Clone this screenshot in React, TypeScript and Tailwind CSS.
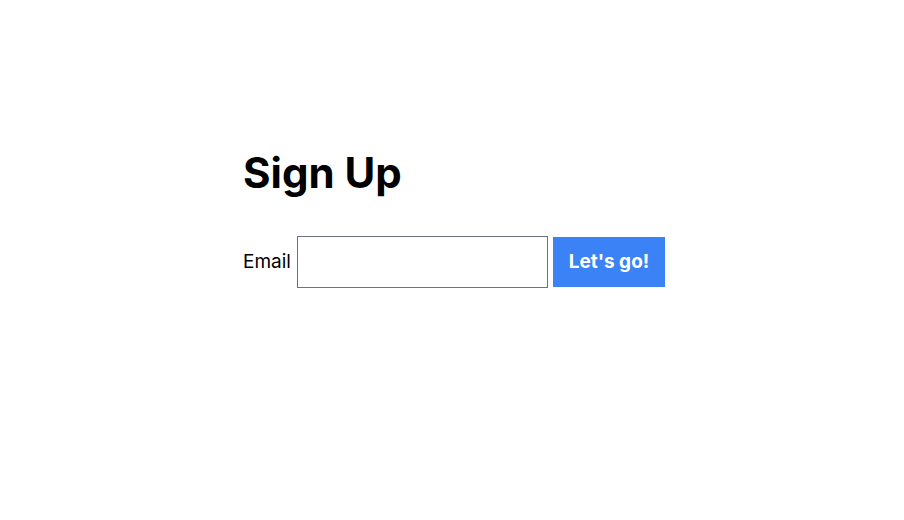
import React from 'react'

const App = () => {
  return (
    <div className="min-h-screen bg-white font-['Inter',sans-serif] text-black">
      <div className="pt-[140px] pl-[243px]">
        <h1 className="text-[42px] font-bold leading-none py-[12px]">Sign Up</h1>
        <form className="mt-[30px] flex items-center" onSubmit={(e) => e.preventDefault()}>
          <label htmlFor="email" className="text-[19px] mr-[6px]">Email</label>
          <input id="email" type="email" className="h-[52px] w-[251px] border border-[#6b7280] bg-white" />
          <button type="submit" className="ml-[5px] h-[50px] w-[112px] bg-[#3b82f6] text-[19px] font-bold text-white">
            Let's go!
          </button>
        </form>
      </div>
    </div>
  )
}

export default App
